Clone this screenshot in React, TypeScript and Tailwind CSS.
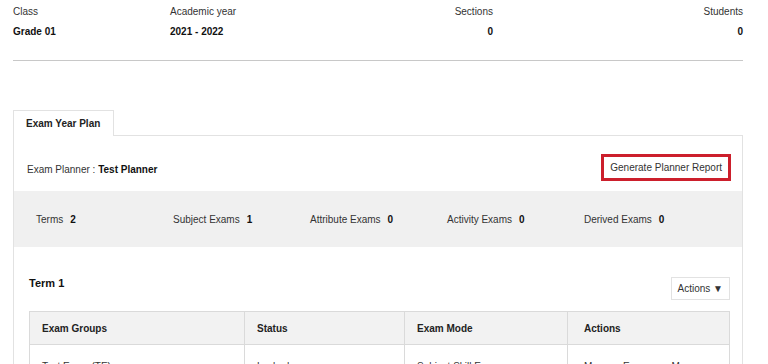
const stats = [
  { label: "Terms", value: "2" },
  { label: "Subject Exams", value: "1" },
  { label: "Attribute Exams", value: "0" },
  { label: "Activity Exams", value: "0" },
  { label: "Derived Exams", value: "0" },
];

const rows = [
  { group: "Test Exam (TE)", status: "Locked", mode: "Subject Skill Exam" },
];

export default function App() {
  return (
    <div
      className="min-h-[364px] bg-white text-[10px] text-[#333]"
      style={{ fontFamily: '"Liberation Sans", Arial, sans-serif' }}
    >
      <div className="ml-[13px] w-[730px]">
        {/* class summary */}
        <div className="flex pt-[5px] pb-[21px] border-b border-[#c8c8c8] leading-[14px]">
          <div className="w-[157px]">
            <div>Class</div>
            <div className="mt-[6px] font-bold text-[#111]">Grade 01</div>
          </div>
          <div className="flex-1">
            <div>Academic year</div>
            <div className="mt-[6px] font-bold text-[#111]">2021 - 2022</div>
          </div>
          <div className="text-right">
            <div>Sections</div>
            <div className="mt-[6px] font-bold text-[#111]">0</div>
          </div>
          <div className="w-[250px] text-right">
            <div>Students</div>
            <div className="mt-[6px] font-bold text-[#111]">0</div>
          </div>
        </div>

        {/* tabs */}
        <div className="mt-[49px] flex">
          <div className="relative z-10 -mb-px flex h-[26px] w-[101px] items-center border border-b-0 border-[#e2e2e2] bg-white pl-[12px] font-bold text-[#222]">
            Exam Year Plan
          </div>
        </div>

        <div className="border border-b-0 border-[#e2e2e2] pb-[40px]">
          <div className="flex items-center justify-between pt-[18px] pb-[10px] pl-[13px] pr-[11px]">
            <div className="pt-[3px]">
              Exam Planner :{" "}
              <span className="font-bold text-[#111]">Test Planner</span>
            </div>
            <button
              type="button"
              className="h-[27px] border-[3px] border-[#cc1f2c] bg-white px-[6px] text-[10px] text-[#333]"
            >
              Generate Planner Report
            </button>
          </div>

          <div className="flex h-[56px] items-center bg-[#f0f0f0] pl-[22px]">
            {stats.map((s) => (
              <div key={s.label} className="w-[137px]">
                {s.label}
                <span className="ml-[7px] font-bold text-[#111]">{s.value}</span>
              </div>
            ))}
          </div>

          <div className="pl-[15px] pr-[12px] pt-[28px]">
            <div className="flex items-start justify-between">
              <div className="text-[11px] leading-[16px] font-bold text-[#111]">
                Term 1
              </div>
              <button
                type="button"
                className="mt-[2px] h-[23px] border border-[#e2e2e2] bg-white px-[6px] text-[10px] text-[#333]"
              >
                Actions ▼
              </button>
            </div>

            <table className="mt-[11px] w-full table-fixed border-collapse">
              <thead>
                <tr className="bg-[#f2f2f2]">
                  <th className="h-[33px] w-[215px] border border-[#dadada] pl-[12px] text-left font-bold text-[#222]">
                    Exam Groups
                  </th>
                  <th className="w-[160px] border border-[#dadada] pl-[12px] text-left font-bold text-[#222]">
                    Status
                  </th>
                  <th className="w-[163px] border border-[#dadada] pl-[12px] text-left font-bold text-[#222]">
                    Exam Mode
                  </th>
                  <th className="border border-[#dadada] pl-[16px] text-left font-bold text-[#222]">
                    Actions
                  </th>
                </tr>
              </thead>
              <tbody>
                {rows.map((r, key) => (
                  <tr key={key}>
                    <td className="h-[44px] border border-[#dadada] pl-[12px] text-[#333]">{r.group}</td>
                    <td className="border border-[#dadada] pl-[12px] text-[#333]">{r.status}</td>
                    <td className="border border-[#dadada] pl-[12px] text-[#333]">{r.mode}</td>
                    <td className="border border-[#dadada] pl-[16px] text-[#333]">
                      Manage Exams<span className="ml-[18px]">More ▼</span>
                    </td>
                  </tr>
                ))}
              </tbody>
            </table>
          </div>
        </div>
      </div>
    </div>
  );
}
